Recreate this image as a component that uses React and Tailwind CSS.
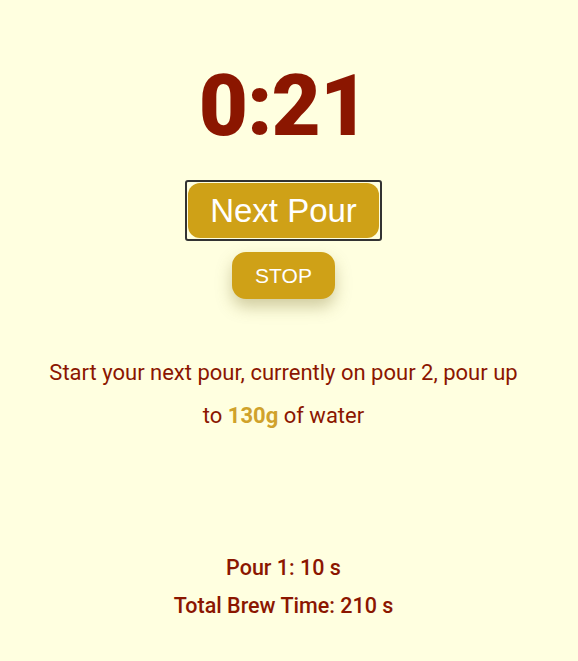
export default function App() {
  return (
    <div className="min-h-[661px] w-full bg-[#ffffe0]">
      <div className="w-[567px] flex flex-col items-center font-['Roboto',sans-serif] text-[#8b1600]">
        <div className="mt-[56px] text-[85px] leading-[100px] font-black tracking-[-1px]">0:21</div>
        <div className="mt-[24px] rounded-[3px] border-2 border-[#333333] p-[1px]">
          <button className="rounded-[12px] bg-[#cfa117] px-[22px] h-[55px] text-[33px] leading-none text-white font-['Liberation_Sans',Arial,sans-serif]">
            Next Pour
          </button>
        </div>
        <button className="mt-[11px] rounded-[14px] bg-[#cfa117] w-[103px] h-[47px] text-[21px] text-white font-['Liberation_Sans',Arial,sans-serif] shadow-[0_8px_16px_rgba(120,110,40,0.35)]">
          STOP
        </button>
        <p className="mt-[52px] w-[490px] text-center text-[22px] leading-[43px]">
          Start your next pour, currently on pour 2, pour up to <span className="font-bold text-[#d0a22b]">130g</span> of water
        </p>
        <div className="mt-[112px] flex flex-col items-center text-[21.5px] font-medium leading-[38px]">
          <div>Pour 1: 10 s</div>
          <div>Total Brew Time: 210 s</div>
        </div>
      </div>
    </div>
  );
}
